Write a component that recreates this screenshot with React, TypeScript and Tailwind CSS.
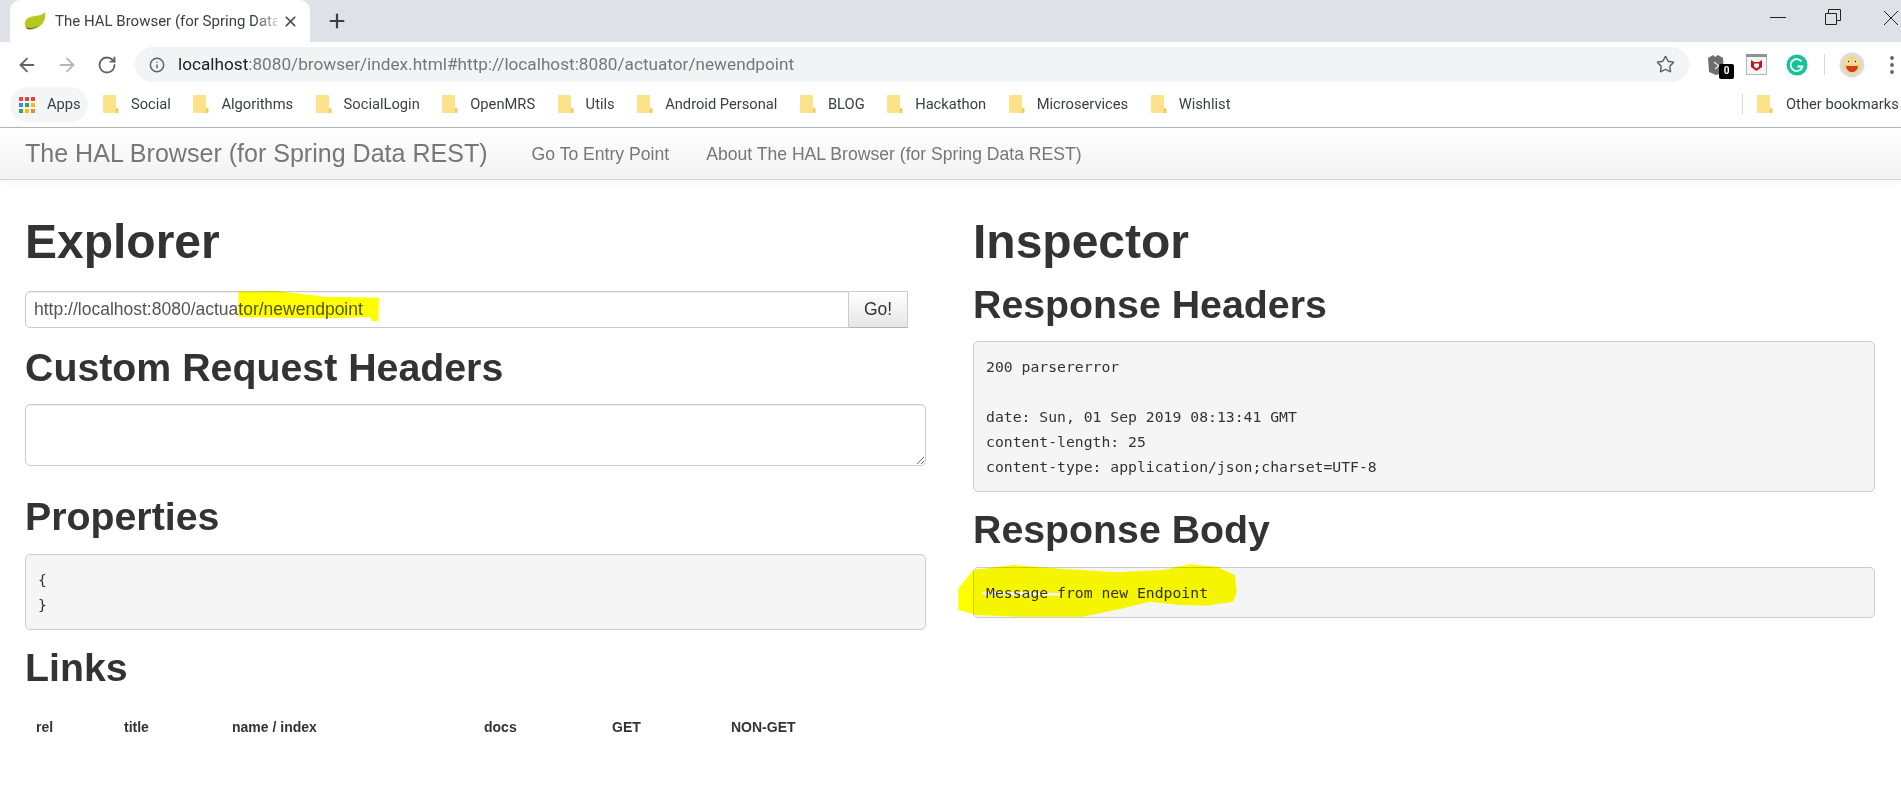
import { ArrowLeft, ArrowRight, Info, Plus, RotateCw, Star, X } from "lucide-react";

const bookmarks = [
  "Social",
  "Algorithms",
  "SocialLogin",
  "OpenMRS",
  "Utils",
  "Android Personal",
  "BLOG",
  "Hackathon",
  "Microservices",
  "Wishlist",
];

const appsDots = [
  "#ea4335", "#ea4335", "#ea4335",
  "#4285f4", "#34a853", "#fbbc05",
  "#34a853", "#fbbc05", "#ea8a35",
];

function Folder() {
  return (
    <svg width="16" height="18" viewBox="0 0 16 18" className="shrink-0">
      <path d="M1 0h11.5l.5 1v13l2 .5V17a1 1 0 0 1-1 1H1a1 1 0 0 1-1-1V1a1 1 0 0 1 1-1z" fill="#fde28c" />
      <path d="M13 13v5h1.5a1 1 0 0 0 1-1v-3.500z" fill="#f4c95d" />
    </svg>
  );
}

function Bookmark({ label }: { label: string }) {
  return (
    <div className="flex items-center gap-[12px] pr-[12px]">
      <Folder />
      <span>{label}</span>
    </div>
  );
}

function Heading1({ children }: { children: string }) {
  return <h1 className="text-[48px] leading-[52px] font-bold text-[#333]">{children}</h1>;
}

function Heading2({ children }: { children: string }) {
  return <h2 className="text-[39.3px] leading-[50px] font-bold text-[#333]">{children}</h2>;
}

function Pre({ children }: { children: string }) {
  return (
    <pre className="rounded-[5px] border border-[#ccc] bg-[#f5f5f5] px-[12px] py-[12px] font-['DejaVu_Sans_Mono',monospace] text-[14.76px] leading-[25px] text-[#333]">
      {children}
    </pre>
  );
}

export default function App() {
  return (
    <div className="relative flex h-[791px] w-[1901px] flex-col overflow-hidden bg-white font-['Liberation_Sans',sans-serif]">
      {/* tab strip */}
      <div className="flex h-[42px] items-end bg-[#dee1e6] pl-[10px] font-['Roboto',sans-serif]">
        <div className="relative flex h-[42px] w-[300px] items-center rounded-t-[10px] bg-white pl-[14px]">
          <svg width="22" height="20" viewBox="0 0 22 20" className="shrink-0">
            <path d="M21 1c1 6-1 11-5 14-4 3-9 4-13 3C0 15 0 10 4 7c5-3 13-1 17-6z" fill="#b4c821" />
            <path d="M2 16c4 2 9 1 13-2-4 4-8 5-12 4z" fill="#5f7420" />
          </svg>
          <span className="ml-[9px] w-[222px] overflow-hidden whitespace-nowrap text-[15px] text-[#3c4043]">
            The HAL Browser (for Spring Data REST)
          </span>
          <span className="absolute left-[245px] top-[8px] h-[26px] w-[30px] bg-gradient-to-r from-transparent to-white" />
          <X size={17} strokeWidth={2.4} className="absolute left-[272px] top-[13px] text-[#45484c]" />
        </div>
        <Plus size={22} strokeWidth={2.4} className="mb-[10px] ml-[16px] text-[#3c4043]" />
        <div className="ml-auto flex h-[42px] items-start pr-[2px]">
          <svg width="16" height="34" viewBox="0 0 16 34" className="mr-[39px]">
            <path d="M0 17.500h16" stroke="#222" strokeWidth="1" />
          </svg>
          <svg width="16" height="34" viewBox="0 0 16 34" className="mr-[42px]">
            <path d="M.5 13.500h11v11H.5zM3.500 13v-3.500h12v11H12" stroke="#222" fill="none" />
          </svg>
          <svg width="16" height="34" viewBox="0 0 16 34">
            <path d="M1 11l14 14M15 11L1 25" stroke="#222" fill="none" />
          </svg>
        </div>
      </div>

      {/* toolbar */}
      <div className="flex h-[40px] items-end bg-white font-['Roboto',sans-serif]">
        <div className="flex h-[35px] items-center">
          <ArrowLeft size={22} strokeWidth={2} className="ml-[16px] text-[#5f6368]" />
          <ArrowRight size={22} strokeWidth={2} className="ml-[18px] text-[#b4b7bb]" />
          <RotateCw size={20} strokeWidth={2.2} className="ml-[19px] text-[#5f6368]" />
        </div>
        <div className="ml-[18px] flex h-[35px] w-[1554px] items-center rounded-full bg-[#f1f3f4] pl-[14px] pr-[14px]">
          <Info size={16} strokeWidth={2.2} className="text-[#5f6368]" />
          <span className="ml-[13px] text-[17.2px] text-[#777]">
            <span className="text-[#202124]">localhost</span>:8080/browser/index.html#http://localhost:8080/actuator/newendpoint
          </span>
          <Star size={19} strokeWidth={1.8} className="ml-auto text-[#5f6368]" />
        </div>
        <div className="flex h-[35px] items-center">
          <div className="relative ml-[17px] h-[24px] w-[24px]">
            <svg width="20" height="24" viewBox="0 0 20 24">
              <path d="M2 5l5-3 2 2 3-2 5 3 1 15-8 2-7-3z" fill="#6d6e70" />
              <path d="M8 9l5 4-4 3" stroke="#e8e8e8" strokeWidth="1.4" fill="none" />
            </svg>
            <span className="absolute left-[13px] top-[11px] flex h-[15px] w-[15px] items-center justify-center rounded-[2px] bg-black text-[10px] font-bold leading-none text-white">
              0
            </span>
          </div>
          <svg width="21" height="21" viewBox="0 0 21 21" className="ml-[16px]">
            <rect x="0.5" y="0.5" width="20" height="20" fill="#f5f5f5" stroke="#b4b8bb" />
            <rect x="0" y="0" width="21" height="3" fill="#8d9296" />
            <path d="M5 6l3 2h5l3-2v7l-5.500 4L5 13z" fill="#c01818" />
            <path d="M8 9.500h5v3l-2.500 2-2.500-2z" fill="#f5f5f5" />
          </svg>
          <svg width="22" height="22" viewBox="0 0 22 22" className="ml-[19px]">
            <circle cx="11" cy="11" r="10.500" fill="#15c39a" />
            <path d="M15.500 7.500a6 6 0 1 0 1 5H11.500" stroke="#fff" strokeWidth="1.800" fill="none" />
          </svg>
          <span className="ml-[16px] h-[21px] w-px bg-[#d5d7da]" />
          <svg width="26" height="26" viewBox="0 0 26 26" className="ml-[14px]">
            <circle cx="13" cy="13" r="12.500" fill="#dcdcdc" />
            <circle cx="13" cy="13" r="9" fill="#f6d77a" />
            <path d="M7 14h12c-.5 4-3 6-6 6s-5.500-2-6-6z" fill="#d63a2a" />
            <circle cx="9.500" cy="9.500" r="2" fill="#fff" />
            <circle cx="16.500" cy="9.500" r="2" fill="#fff" />
            <circle cx="9.500" cy="9.500" r="1" fill="#4a3416" />
            <circle cx="16.500" cy="9.500" r="1" fill="#4a3416" />
          </svg>
          <svg width="6" height="20" viewBox="0 0 6 20" className="ml-[24px]">
            <circle cx="3" cy="3" r="1.900" fill="#5f6368" />
            <circle cx="3" cy="10" r="1.900" fill="#5f6368" />
            <circle cx="3" cy="17" r="1.900" fill="#5f6368" />
          </svg>
        </div>
      </div>

      {/* bookmarks */}
      <div className="flex h-[46px] shrink-0 items-center border-b border-[#b9b9b9] pl-[10px] font-['Roboto',sans-serif] text-[14.7px] text-[#3c4043]">
        <div className="flex h-[35px] w-[78px] items-center rounded-full bg-[#f4f5f6] pl-[9px]">
          <div className="grid grid-cols-3 gap-[2px]">
            {appsDots.map((color, i) => (
              <span key={i} className="h-[4px] w-[4px]" style={{ backgroundColor: color }} />
            ))}
          </div>
          <span className="ml-[12px]">Apps</span>
        </div>
        <div className="ml-[15px] flex items-center gap-[10.5px]">
          {bookmarks.map((label) => (
            <Bookmark key={label} label={label} />
          ))}
        </div>
        <div className="ml-auto flex items-center overflow-hidden">
          <span className="h-[20px] w-px bg-[#d5d7da]" />
          <div className="ml-[14px] flex items-center gap-[13px] whitespace-nowrap">
            <Folder />
            <span className="w-[115px]">Other bookmarks</span>
          </div>
        </div>
      </div>

      {/* nav bar */}
      <div className="z-10 flex h-[52px] shrink-0 items-center border-b border-[#d4d4d4] bg-gradient-to-b from-white to-[#f2f2f2] pl-[25px] pt-[1px] shadow-[0_1px_8px_rgba(0,0,0,0.07)]">
        <span className="text-[25.05px] text-[#777]">The HAL Browser (for Spring Data REST)</span>
        <a className="ml-[44px] text-[17.6px] text-[#777]">Go To Entry Point</a>
        <a className="ml-[37px] text-[17.6px] text-[#777]">About The HAL Browser (for Spring Data REST)</a>
      </div>

      {/* content */}
      <div className="grid grid-cols-[901px_902px] gap-x-[47px] px-[25px] pt-[36px] text-[#333]">
        <div>
          <Heading1>Explorer</Heading1>
          <form className="mt-[23px] flex h-[37px] w-[883px]">
            <input
              readOnly
              value="http://localhost:8080/actuator/newendpoint"
              className="h-full w-[824px] rounded-l-[5px] border border-[#ccc] px-[8px] text-[17.5px] text-[#555] shadow-[inset_0_1px_1px_rgba(0,0,0,0.075)] outline-none"
            />
            <button
              type="button"
              className="h-full w-[59px] border border-l-0 border-[#ccc] border-b-[#b3b3b3] bg-gradient-to-b from-white to-[#e6e6e6] text-[17.5px] text-[#333]"
            >
              Go!
            </button>
          </form>
          <div className="mt-[14px]">
            <Heading2>Custom Request Headers</Heading2>
          </div>
          <textarea
            readOnly
            className="mt-[12px] block h-[62px] w-full rounded-[5px] border border-[#ccc] shadow-[inset_0_1px_1px_rgba(0,0,0,0.075)] outline-none"
          />
          <div className="mt-[25px]">
            <Heading2>Properties</Heading2>
          </div>
          <div className="mt-[13px]">
            <Pre>{"{\n}"}</Pre>
          </div>
          <div className="mt-[12px]">
            <Heading2>Links</Heading2>
          </div>
          <table className="mt-[25px] w-[798px] table-fixed text-left text-[14px] font-bold text-[#333]">
            <thead>
              <tr>
                <th className="w-[99px] pl-[11px]">rel</th>
                <th className="w-[108px]">title</th>
                <th className="w-[252px]">name / index</th>
                <th className="w-[128px]">docs</th>
                <th className="w-[119px]">GET</th>
                <th>NON-GET</th>
              </tr>
            </thead>
          </table>
        </div>
        <div>
          <Heading1>Inspector</Heading1>
          <div className="mt-[11px]">
            <Heading2>Response Headers</Heading2>
          </div>
          <div className="mt-[12px]">
            <Pre>
              {"200 parsererror\n\ndate: Sun, 01 Sep 2019 08:13:41 GMT\ncontent-length: 25\ncontent-type: application/json;charset=UTF-8"}
            </Pre>
          </div>
          <div className="mt-[12px]">
            <Heading2>Response Body</Heading2>
          </div>
          <div className="mt-[13px]">
            <Pre>Message from new Endpoint</Pre>
          </div>
        </div>
      </div>

      {/* marker scribbles drawn over the screenshot */}
      <svg width="170" height="45" viewBox="0 0 510 135" className="absolute left-[225px] top-[285px] mix-blend-multiply">
        <path d="M40 20 150 18 300 35 462 38 460 108 440 108 435 96 300 100 40 96z" fill="#ffff00" />
      </svg>
      <svg width="300" height="70" viewBox="0 0 900 210" className="absolute left-[950px] top-[555px] mix-blend-multiply">
        <path
          fillRule="evenodd"
          d="M25 100 70 45 190 30 340 42 500 52 640 45 720 28 800 35 855 60 860 110 850 140 770 152 690 150 600 140 520 160 400 185 200 185 80 180 25 165zM97 110 330 114 330 122 97 118z"
          fill="#ffff00"
        />
      </svg>
    </div>
  );
}
